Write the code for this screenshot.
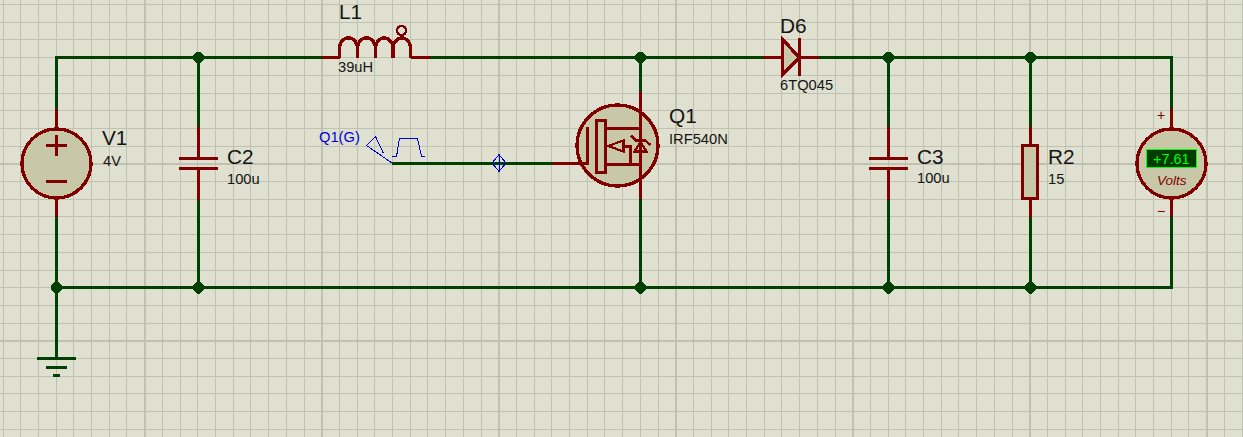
const GRID = "#bfc1b1";
const WIRE = "#004000";
const PART = "#800000";
const BODY = "#c8c8a9";
const PROBE = "#0000d8";

// grid pitch is not a whole number of pixels, so lines are rounded one by one
const PITCH = 17.7;
const gridX = Array.from({ length: 72 }, (_, i) => ({ at: Math.round(2.6 + i * PITCH), major: (i + 2) % 10 === 0 }));
const gridY = Array.from({ length: 26 }, (_, i) => ({ at: Math.round(4 + i * PITCH), major: (i + 1) % 10 === 0 }));

const wires = [
  "M56.5 109V57.5H322",
  "M430 57.5H763",
  "M819 57.5H1171.5V109",
  "M1171.5 217V287.5H56.5V217",
  "M56.5 287.5V358",
  "M198.5 57.5V127",
  "M198.5 200V287.5",
  "M640.5 57.5V92",
  "M640.5 199V287.5",
  "M888.5 57.5V127",
  "M888.5 200V287.5",
  "M1030.5 57.5V127",
  "M1030.5 217V287.5",
  "M392 163.5H553",
];

const junctions = [
  [198.5, 57.5],
  [640.5, 57.5],
  [888.5, 57.5],
  [1030.5, 57.5],
  [56.5, 287.5],
  [198.5, 287.5],
  [640.5, 287.5],
  [888.5, 287.5],
  [1030.5, 287.5],
];

const Capacitor = ({ x }: { x: number }) => (
  <g stroke={PART} strokeWidth={3.4} fill="none">
    <path d={`M${x} 127V158M${x} 169V200`} />
    <path d={`M${x - 19.5} 158.5H${x + 19.5}M${x - 19.5} 168.5H${x + 19.5}`} />
  </g>
);

const Circuit = () => (
  <svg width={1243} height={437} viewBox="0 0 1243 437" className="absolute inset-0" shapeRendering="crispEdges">
    {gridX.map((l) => (
      <rect key={l.at} x={l.at} y={0} width={l.major ? 2 : 1} height={437} fill={GRID} />
    ))}
    {gridY.map((l) => (
      <rect key={l.at} x={0} y={l.at} width={1243} height={l.major ? 2 : 1} fill={GRID} />
    ))}

    <g stroke={WIRE} strokeWidth={3.4} fill="none">
      {wires.map((d) => (
        <path key={d} d={d} />
      ))}
      <path d="M37 358.5H76M46 367.5H67M53 375.5H60" />
    </g>
    {junctions.map(([x, y]) => (
      <polygon
        key={`${x}-${y}`}
        fill={WIRE}
        transform={`translate(${x} ${y})`}
        points="-6,-1.5 -1.5,-6 1.5,-6 6,-1.5 6,1.5 1.5,6 -1.5,6 -6,1.5"
      />
    ))}

    {/* V1 */}
    <g stroke={PART} strokeWidth={3.4}>
      <path d="M56.5 109V128M56.5 199V217" fill="none" />
      <circle cx={56.5} cy={163.5} r={34.5} fill={BODY} />
      <path d="M46 145.5H67M56.5 135V156M46 181.5H67" fill="none" />
    </g>

    <Capacitor x={198.5} />
    <Capacitor x={888.5} />

    {/* L1 */}
    <g stroke={PART} strokeWidth={3.4} fill="none">
      <path d="M322 57.5H339.5M410.5 57.5H430" />
      <path d="M339.5 58V48A9 10 0 0 1 357.5 48V58V48A9 10 0 0 1 375.5 48V58V48A8.75 10 0 0 1 393 48V58V48A8.75 10 0 0 1 410.5 48V58" />
      <circle cx={401.5} cy={30.5} r={4.5} strokeWidth={2.6} />
    </g>

    {/* generator probe */}
    <g stroke={PROBE} strokeWidth={1} fill="none">
      <path d="M375.5 136.5L366.5 145.5L392 163M375.5 136.5L383.5 153.5" />
      <path d="M392 156.5H396.5L399.5 138.5H417.5L421.5 156.5H425" />
      <path d="M499 154.5L506 163L499 171.5L492 163ZM499 154.5V171.5" />
    </g>

    {/* Q1 */}
    <g stroke={PART} strokeWidth={3.4} fill="none">
      <circle cx={617.5} cy={145.5} r={40.5} fill={BODY} />
      <path d="M553 163.5H587.5V127" />
      <rect x={596.5} y={120.5} width={9} height={52} />
      <path d="M640.5 92V199M606 128.5H640.5M606 164.5H640.5" />
      <path d="M630.5 164V146.5H623" strokeWidth={3} />
      <path d="M608 146L623.5 140.5V151.5Z" strokeWidth={2.2} />
      <path d="M640.5 142L634.5 151.5H646.5Z" strokeWidth={2.2} />
      <path d="M631 135.5L636 140.5H645L650.5 145" strokeWidth={2.4} />
    </g>

    {/* D6 */}
    <g stroke={PART} strokeWidth={3.4}>
      <path d="M763 57.5H782M800 57.5H819M799.5 38V76" fill="none" />
      <path d="M782.5 39.5V74.5L799.5 57.5Z" fill={BODY} />
    </g>

    {/* R2 */}
    <g stroke={PART} strokeWidth={3.4}>
      <path d="M1030.5 127V144M1030.5 199V217" fill="none" />
      <rect x={1022.5} y={145.5} width={15} height={53} fill={BODY} />
    </g>

    {/* voltmeter */}
    <g stroke={PART} strokeWidth={3.4}>
      <path d="M1171.5 109V128M1171.5 199V217" fill="none" />
      <circle cx={1171.5} cy={163.5} r={34.5} fill={BODY} />
    </g>
    <rect x={1146.5} y={149.5} width={50} height={18} fill="#003c00" stroke="#00ff00" strokeWidth={1.5} />
  </svg>
);

const Label = ({ x, y, big, children }: { x: number; y: number; big?: boolean; children: string }) => (
  <span
    className={`absolute leading-none whitespace-pre text-[#141414] ${big ? "text-[20.8px]" : "text-[14.7px]"}`}
    style={{ left: x, top: y }}
  >
    {children}
  </span>
);

export default function App() {
  return (
    <div className="relative w-[1243px] h-[437px] overflow-hidden bg-[#dfe0d0] font-['Liberation_Sans',Arial,sans-serif]">
      <Circuit />

      <Label x={102} y={128} big>V1</Label>
      <Label x={103} y={153.5}>4V</Label>
      <Label x={227} y={147} big>C2</Label>
      <Label x={227} y={171.5}>100u</Label>
      <Label x={339} y={2} big>L1</Label>
      <Label x={338} y={59.5}>39uH</Label>
      <Label x={669} y={105.5} big>Q1</Label>
      <Label x={669} y={131.5}>IRF540N</Label>
      <Label x={780} y={16} big>D6</Label>
      <Label x={780} y={77.5}>6TQ045</Label>
      <Label x={917} y={146.5} big>C3</Label>
      <Label x={917} y={170.5}>100u</Label>
      <Label x={1048} y={146.5} big>R2</Label>
      <Label x={1048} y={171.5}>15</Label>

      <span className="absolute left-[319px] top-[129.5px] text-[14.7px] leading-none text-[#0000d8]">Q1(G)</span>
      <span className="absolute left-[1157px] top-[108px] text-[14px] leading-none text-[#800000]">+</span>
      <span className="absolute left-[1157px] top-[204px] text-[14px] leading-none text-[#800000]">−</span>
      <span className="absolute left-[1153px] top-[152px] text-[14.5px] leading-none text-[#00ff00]">+7.61</span>
      <span className="absolute left-[1157px] top-[174px] text-[13.5px] leading-none italic text-[#800000]">Volts</span>
    </div>
  );
}
